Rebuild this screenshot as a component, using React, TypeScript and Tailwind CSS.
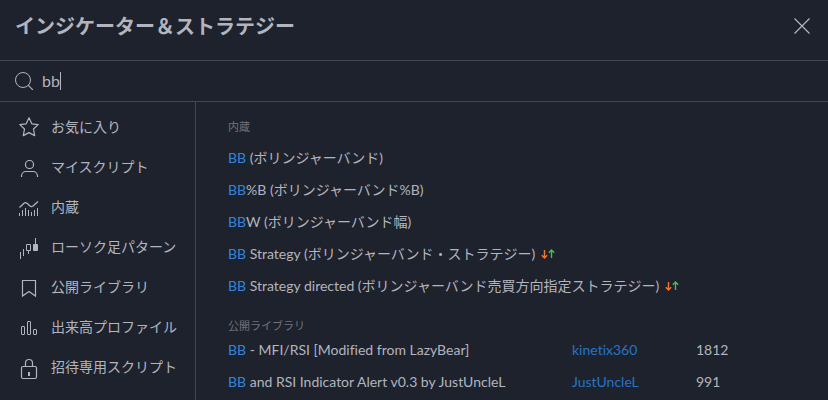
import React from 'react';

const s = { fill: 'none', stroke: 'currentColor', strokeWidth: 1 } as const;

const categories: { label: string; icon: React.ReactNode }[] = [
  {
    label: 'お気に入り',
    icon: <path {...s} strokeWidth={1.2} strokeLinejoin="round" d="M14 3.8l2.800 6 6.400.8-4.700 4.400 1.200 6.600-5.700-3-5.700 3 1.200-6.600-4.700-4.400 6.400-.8z" />,
  },
  {
    label: 'マイスクリプト',
    icon: (
      <g {...s} strokeWidth={1.2}>
        <rect x="10.5" y="6.5" width="8" height="8" rx="3.8" />
        <path d="M6.5 23v-1c0-2.500 2-4.500 4.500-4.500h7c2.500 0 4.500 2 4.500 4.500v1" />
      </g>
    ),
  },
  {
    label: '内蔵',
    icon: (
      <g {...s}>
        <path strokeWidth={1.3} d="M4.500 13.500l4.500-4.200q1.500-1.300 3 0l3 2.800q1.500 1.200 3 0l5-4.600" />
        <path d="M4.500 19v3M7.500 16v6M10.500 14v8M13.500 16v6M16.500 18v4M19.500 16v6M22.500 14v8" />
      </g>
    ),
  },
  {
    label: 'ローソク足パターン',
    icon: (
      <g {...s}>
        <path d="M5.500 18v7M8.500 15v7M13.500 17v3M20.500 4v6" />
        <path d="M11.500 10.500h4v6h-4z" />
        <path fill="currentColor" d="M18.500 10.500h4v6h-4z" />
      </g>
    ),
  },
  {
    label: '公開ライブラリ',
    icon: <path {...s} strokeWidth={1.2} d="M7.500 6.500h13v15.500l-6.500-4.500-6.500 4.500z" />,
  },
  {
    label: '出来高プロファイル',
    icon: (
      <g {...s}>
        <rect x="6.500" y="12.500" width="3" height="8" rx=".5" />
        <rect x="12.500" y="7.500" width="3" height="13" rx=".5" />
        <rect x="18.500" y="15.500" width="3" height="5" rx=".5" />
      </g>
    ),
  },
  {
    label: '招待専用スクリプト',
    icon: (
      <g {...s} strokeWidth={1.2}>
        <rect x="6.500" y="12.500" width="15" height="12" rx="1.500" />
        <path d="M10.500 12.500v-3.500a3.500 3.500 0 0 1 7 0v3.500" />
        <path strokeWidth={2} d="M14 18v4" />
      </g>
    ),
  },
];

const builtins = [
  { rest: ' (ボリンジャーバンド)', strategy: false },
  { rest: '%B (ボリンジャーバンド%B)', strategy: false },
  { rest: 'W (ボリンジャーバンド幅)', strategy: false },
  { rest: ' Strategy (ボリンジャーバンド・ストラテジー)', strategy: true },
  { rest: ' Strategy directed (ボリンジャーバンド売買方向指定ストラテジー)', strategy: true },
];

const scripts = [
  { rest: ' - MFI/RSI [Modified from LazyBear]', author: 'kinetix360', likes: 1812 },
  { rest: ' and RSI Indicator Alert v0.3 by JustUncleL', author: 'JustUncleL', likes: 991 },
];

function StrategyArrows() {
  return (
    <svg width="14" height="10" viewBox="0 0 14 10" fill="none" className="shrink-0" aria-hidden="true">
      <path stroke="#f57530" strokeWidth="1.400" d="M3.500 1v8M.8 6.300l2.700 2.700 2.700-2.700" />
      <path stroke="#4cbb50" strokeWidth="1.400" d="M10.500 9V1M7.800 3.700l2.700-2.700 2.700 2.700" />
    </svg>
  );
}

function Hit() {
  return <span className="text-[#2e86de]">BB</span>;
}

export default function App() {
  return (
    <div className="flex h-screen flex-col overflow-hidden bg-[#1e222d] font-[Lato,'Noto_Sans_CJK_JP',sans-serif] text-sm text-[#b2b5be] [font-variant-ligatures:none]">
      <header className="flex h-[61px] shrink-0 items-center justify-between border-b border-[#434651] pr-4 pb-2 pl-[15px]">
        <h1 className="text-xl font-bold">インジケーター＆ストラテジー</h1>
        <button type="button" aria-label="閉じる" className="flex size-5 items-center justify-center">
          <svg width="18" height="18" viewBox="0 0 18 18" aria-hidden="true">
            <path {...s} strokeWidth={1.2} d="M1.500 1.500l15 15M16.500 1.500l-15 15" />
          </svg>
        </button>
      </header>
      <label className="flex h-[41px] shrink-0 cursor-text items-center border-b border-[#434651] px-3">
        <svg width="24" height="24" viewBox="0 0 24 24" className="mr-1.5" aria-hidden="true">
          <circle {...s} cx="11" cy="11" r="7.500" />
          <path {...s} strokeWidth={1.2} d="M16.300 16.300l4.500 4.500" />
        </svg>
        <input aria-label="検索" defaultValue="bb" className="field-sizing-content bg-transparent text-base outline-none" />
        <span className="h-[18px] w-px bg-[#b2b5be]" />
      </label>
      <div className="flex min-h-0 flex-1">
        <nav className="w-[196px] shrink-0 border-r border-[#434651] pt-[5px]">
          {categories.map((c) => (
            <button key={c.label} type="button" className="flex h-10 w-full items-center gap-2 pl-[15px] text-left whitespace-nowrap">
              <svg width="28" height="28" viewBox="0 -1 28 28" className="shrink-0" aria-hidden="true">
                {c.icon}
              </svg>
              {c.label}
            </button>
          ))}
        </nav>
        <main className="min-w-0 flex-1 overflow-hidden pl-8 whitespace-nowrap">
          <h2 className="flex h-10 items-center pt-2.5 text-[11px] text-[#6f727d]">内蔵</h2>
          <ul>
            {builtins.map((b) => (
              <li key={b.rest} className="flex h-8 items-center gap-1.5">
                <span>
                  <Hit />
                  {b.rest}
                </span>
                {b.strategy && <StrategyArrows />}
              </li>
            ))}
          </ul>
          <h2 className="flex h-8 items-end text-[11px] text-[#6f727d]">公開ライブラリ</h2>
          <table className="w-full table-fixed">
            <tbody>
              {scripts.map((r) => (
                <tr key={r.author} className="h-8">
                  <td className="w-[344px]">
                    <Hit />
                    {r.rest}
                  </td>
                  <td className="w-[124px]">
                    <a href="#" className="text-[#2474cc]">
                      {r.author}
                    </a>
                  </td>
                  <td>{r.likes}</td>
                </tr>
              ))}
            </tbody>
          </table>
        </main>
      </div>
    </div>
  );
}
